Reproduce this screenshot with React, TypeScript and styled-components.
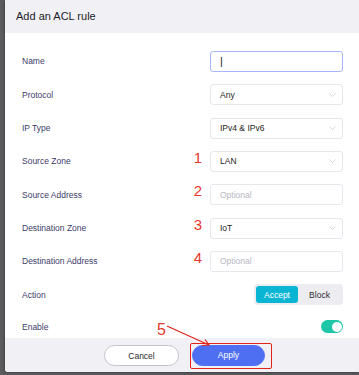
import React from "react";
import styled, { createGlobalStyle } from "styled-components";

const Global = createGlobalStyle`
  html, body { margin: 0; padding: 0; }
  body {
    background: #5b5b5e;
    font-family: "Liberation Sans", Arial, sans-serif;
    width: 359px;
    height: 375px;
    overflow: hidden;
  }
`;

const Page = styled.div`
  display: flex;
  width: 359px;
  height: 375px;
`;

const Dialog = styled.div`
  position: relative;
  margin-left: 5px;
  width: 354px;
  height: 372px;
  background: #ffffff;
  display: flex;
  flex-direction: column;
  border-bottom-left-radius: 3px;
  box-shadow: -1px 1px 2px rgba(0, 0, 0, 0.25);
  overflow: hidden;
`;

const Header = styled.div`
  height: 34px;
  background: #f0f0f5;
  display: flex;
  align-items: center;
  padding-left: 11px;
  font-size: 11px;
  color: #1c1c28;
  padding-bottom: 1px;
  box-sizing: border-box;
`;

const Body = styled.div`
  flex: 1;
  padding: 12px 16px 0 17px;
  display: flex;
  flex-direction: column;
`;

const Row = styled.div<{ $h?: number }>`
  height: ${(p) => p.$h ?? 33.33}px;
  display: flex;
  align-items: center;
`;

const Label = styled.div`
  flex: 1;
  font-size: 8.5px;
  color: #3c3b6a;
`;

const Marker = styled.div`
  width: 16px;
  margin-right: 8px;
  text-align: right;
  font-size: 15px;
  line-height: 15px;
  color: #e8382c;
  margin-top: -8px;
`;

const Field = styled.div<{ $focus?: boolean }>`
  width: 133px;
  height: 21px;
  box-sizing: border-box;
  border: 1px solid ${(p) => (p.$focus ? "#a9b6fb" : "#e6e6ec")};
  border-radius: 3px;
  display: flex;
  align-items: center;
  padding: 0 6px 0 9px;
  font-size: 8.5px;
  color: #1e1e24;
  background: #fff;
`;

const Value = styled.span<{ $placeholder?: boolean }>`
  flex: 1;
  color: ${(p) => (p.$placeholder ? "#b7b7bf" : "#1e1e24")};
`;

const Caret = styled.span`
  font-size: 11px;
  color: #222;
  font-weight: 300;
`;

const Segmented = styled.div`
  width: 89px;
  height: 21px;
  box-sizing: border-box;
  background: #ececf1;
  border-radius: 4px;
  padding: 2px;
  display: flex;
`;

const Segment = styled.div<{ $active?: boolean }>`
  flex: ${(p) => (p.$active ? "0 0 42px" : "1")};
  border-radius: 3px;
  background: ${(p) => (p.$active ? "#0ab4d3" : "transparent")};
  color: ${(p) => (p.$active ? "#ffffff" : "#2a2a30")};
  font-size: 8.5px;
  display: flex;
  align-items: center;
  justify-content: center;
`;

const EnableRow = styled(Row)`
  align-items: flex-start;
  padding-top: 9px;
  box-sizing: border-box;
`;

const EnableLabel = styled(Label)`
  padding-top: 2px;
`;

const Toggle = styled.div`
  width: 22px;
  height: 13px;
  border-radius: 7px;
  background: #1cc6a6;
  display: flex;
  align-items: center;
  justify-content: flex-end;
  padding: 0 1.5px;
  box-sizing: border-box;
`;

const Knob = styled.div`
  width: 10px;
  height: 10px;
  border-radius: 50%;
  background: #fff;
`;

const Footer = styled.div`
  height: 35px;
  background: #f0f0f5;
  display: flex;
  align-items: center;
  justify-content: center;
  gap: 11px;
  padding-left: 12px;
  padding-top: 1px;
  box-sizing: border-box;
`;

const Button = styled.button<{ $primary?: boolean }>`
  width: ${(p) => (p.$primary ? 73 : 75)}px;
  height: 21px;
  border-radius: 11px;
  border: 1px solid ${(p) => (p.$primary ? "#4f6ff3" : "#c3c3cb")};
  background: ${(p) => (p.$primary ? "#4f6ff3" : "#ffffff")};
  color: ${(p) => (p.$primary ? "#ffffff" : "#2a2a32")};
  font-family: "Liberation Sans", Arial, sans-serif;
  font-size: 8.5px;
  padding: 0;
`;

const Highlight = styled.div`
  border: 1.5px solid #e2231a;
  border-radius: 2px;
  padding: 1px 6px 2px 1px;
  display: flex;
`;

const Annotation = styled.div`
  position: absolute;
  left: 150px;
  top: 318px;
  width: 60px;
  height: 32px;
  pointer-events: none;
`;

const Five = styled.span`
  position: absolute;
  left: 2px;
  top: 4px;
  font-size: 16px;
  line-height: 16px;
  color: #e8382c;
`;

const Chevron = () => (
  <svg width="7" height="4" viewBox="0 0 7 4">
    <path d="M0.5 0.5 L3.5 3.5 L6.5 0.5" fill="none" stroke="#cdcdd4" strokeWidth="0.8" />
  </svg>
);

type RowDef = {
  label: string;
  value?: string;
  placeholder?: string;
  select?: boolean;
  marker?: string;
  focus?: boolean;
};

const rows: RowDef[] = [
  { label: "Name", focus: true },
  { label: "Protocol", value: "Any", select: true },
  { label: "IP Type", value: "IPv4 & IPv6", select: true },
  { label: "Source Zone", value: "LAN", select: true, marker: "1" },
  { label: "Source Address", placeholder: "Optional", marker: "2" },
  { label: "Destination Zone", value: "IoT", select: true, marker: "3" },
  { label: "Destination Address", placeholder: "Optional", marker: "4" },
];

export default function App() {
  return (
    <Page>
      <Global />
      <Dialog>
        <Header>Add an ACL rule</Header>
        <Body>
          {rows.map((r) => (
            <Row key={r.label}>
              <Label>{r.label}</Label>
              {r.marker && <Marker>{r.marker}</Marker>}
              <Field $focus={r.focus}>
                {r.focus ? (
                  <Caret>|</Caret>
                ) : (
                  <Value $placeholder={!!r.placeholder}>{r.value ?? r.placeholder}</Value>
                )}
                {r.select && <Chevron />}
              </Field>
            </Row>
          ))}
          <Row>
            <Label>Action</Label>
            <Segmented>
              <Segment $active>Accept</Segment>
              <Segment>Block</Segment>
            </Segmented>
          </Row>
          <EnableRow $h={27}>
            <EnableLabel>Enable</EnableLabel>
            <Toggle>
              <Knob />
            </Toggle>
          </EnableRow>
        </Body>
        <Footer>
          <Button>Cancel</Button>
          <Highlight>
            <Button $primary>Apply</Button>
          </Highlight>
        </Footer>
        <Annotation>
          <Five>5</Five>
          <svg width="60" height="32" viewBox="0 0 60 32">
            <path d="M12 8 L54 27" stroke="#e2231a" strokeWidth="1.2" fill="none" />
            <path d="M47 27.5 L54 27 L50 21.5" stroke="#e2231a" strokeWidth="1.2" fill="none" />
          </svg>
        </Annotation>
      </Dialog>
    </Page>
  );
}
